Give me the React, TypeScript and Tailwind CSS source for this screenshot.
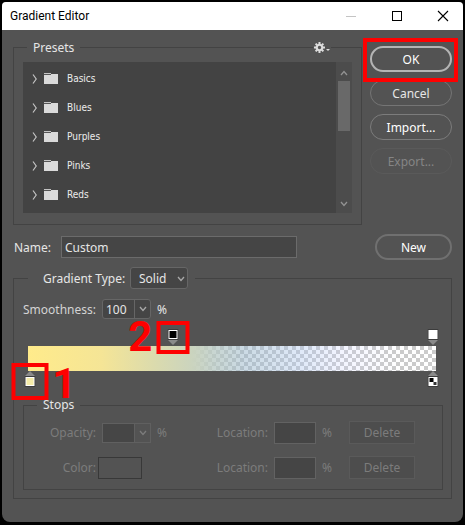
import type { ReactNode } from "react";

const folders = ["Basics", "Blues", "Purples", "Pinks", "Reds"];

function Chevron({ className = "" }: { className?: string }) {
  return (
    <svg className={className} width="8" height="6" viewBox="0 0 8 6" fill="none" stroke="currentColor" strokeWidth="1.3" aria-hidden="true">
      <path d="M1 1 L4 4.5 L7 1" />
    </svg>
  );
}

function PillButton({ children, className, disabled = false }: { children: ReactNode; className: string; disabled?: boolean }) {
  return (
    <button type="button" disabled={disabled} className={`flex h-[26px] w-full items-center justify-center rounded-full pt-[2px] ${className}`}>
      {children}
    </button>
  );
}

function Folder({ name }: { name: string }) {
  return (
    <li>
      <button type="button" className="flex h-[29px] w-full items-center text-left font-['DejaVu_Sans_Condensed','DejaVu_Sans',sans-serif] text-[10px] text-[#ececec]">
        <svg width="6" height="12" viewBox="0 0 6 12" fill="none" stroke="#c4c4c4" strokeWidth="1.2" aria-hidden="true">
          <path d="M1 1.5 L4.2 6 L1 10.5" />
        </svg>
        <svg className="ml-[6px] mr-[9px]" width="14" height="12" viewBox="0 0 14 12" aria-hidden="true">
          <path d="M0 0h7v1H0z" fill="#c4c4c4" />
          <path d="M0 1h14v10H0z" fill="#dadada" />
          <path d="M0 1h7v1H0z" fill="#555" />
        </svg>
        {name}
      </button>
    </li>
  );
}

type SwatchKind = "black" | "white" | "yellow" | "checker";

function Swatch({ kind }: { kind: SwatchKind }) {
  return (
    <svg className="block" width="11" height="11" viewBox="0 0 11 11" aria-hidden="true">
      <rect width="11" height="11" fill="#3c3c3c" />
      <rect x="1" y="1" width="9" height="9" fill="#fff" />
      {kind === "black" && <rect x="2" y="2" width="7" height="7" fill="#000" />}
      {kind === "yellow" && <rect x="2" y="2" width="7" height="7" fill="#f5eca9" />}
      {kind === "checker" && (
        <>
          <rect x="2" y="2" width="4" height="4" fill="#000" />
          <rect x="6" y="6" width="3" height="3" fill="#333" />
        </>
      )}
    </svg>
  );
}

function Stop({ at, kind, label, below = false, callout = "" }: { at: number; kind: SwatchKind; label: string; below?: boolean; callout?: string }) {
  const arrow = (
    <svg className="block" width="11" height="5" viewBox="0 0 11 5" fill="#8a8a8a" aria-hidden="true">
      <path d={below ? "M0.5 5 L5.5 0 L10.5 5z" : "M0.5 0 L5.5 5 L10.5 0z"} />
    </svg>
  );
  return (
    <div className="absolute inset-y-0 w-[11px] -translate-x-1/2" style={{ left: `${at}%` }}>
      <button type="button" aria-label={label} className="block">
        {below && arrow}
        <Swatch kind={kind} />
        {!below && arrow}
      </button>
      {callout && (
        <div className={below ? "absolute -left-[13px] -top-2 size-[37px] border-4 border-[#fe0000]" : "absolute -left-[11px] -top-2 size-[33px] border-4 border-[#fe0000]"}>
          <span className={`absolute font-['Roboto',sans-serif] text-[42px] leading-7 font-bold text-[#fe0000] ${below ? "left-[37px] top-[3px]" : "-left-8 -top-[2px]"}`}>
            {callout}
          </span>
        </div>
      )}
    </div>
  );
}

function Location({ id }: { id: string }) {
  return (
    <>
      <label htmlFor={id} className="ml-auto">Location:</label>
      <input id={id} disabled className="ml-[6px] h-[22px] w-[42px] border border-[#626262] bg-[#454545]" />
      <span className="ml-[6px] w-3">%</span>
      <button type="button" disabled className="ml-[15px] mr-[27px] h-[23px] w-[66px] border border-[#5a5a5a] bg-[#4d4d4d]">
        Delete
      </button>
    </>
  );
}

export default function App() {
  return (
    <div className="min-h-screen bg-black p-[2px] font-['Noto_Sans',sans-serif] text-[12px] leading-[18px] text-[#e6e6e6]">
      <main className="overflow-hidden rounded-lg rounded-t-[4px] bg-[#535353]">
        <header className="flex h-7 items-center bg-white pl-2 pr-[14px] text-black">
          <h1 className="font-['Roboto',sans-serif]">Gradient Editor</h1>
          <div className="ml-auto flex gap-[34px]">
            <button type="button" aria-label="Minimize">
              <svg width="12" height="12" viewBox="0 0 12 12" stroke="#c4c4c4" aria-hidden="true"><path d="M1 6.5h10" /></svg>
            </button>
            <button type="button" aria-label="Maximize">
              <svg width="12" height="12" viewBox="0 0 12 12" fill="none" stroke="#000" aria-hidden="true"><rect x="1.5" y="1.5" width="9" height="9" /></svg>
            </button>
            <button type="button" aria-label="Close">
              <svg width="12" height="12" viewBox="0 0 12 12" stroke="#000" strokeWidth="1.1" aria-hidden="true"><path d="M1 1l10 10M11 1L1 11" /></svg>
            </button>
          </div>
        </header>

        <div className="px-[11px] pb-[23px] pt-[7px]">
          <div className="flex gap-2">
            <fieldset className="relative min-w-0 flex-1 border border-[#434343] px-[9px] pb-[11px] pt-[5px]">
              <legend className="ml-[4px] h-5 px-[6px] pt-[2px]">Presets</legend>
              <button type="button" aria-label="Preset options" className="absolute -top-[18px] right-[30px] flex h-4 items-center bg-[#535353] px-[1px]">
                <svg width="11" height="11" viewBox="-6 -6 12 12" aria-hidden="true">
                  <circle r="3" fill="none" stroke="#dcdcdc" strokeWidth="2.4" />
                  <path d="M0-6V-3.5M0 6V3.5M-6 0H-3.5M6 0H3.5M-4.2-4.2L-2.8-2.8M4.2 4.2L2.8 2.8M-4.2 4.2L-2.8 2.8M4.2-4.2L2.8-2.8" stroke="#dcdcdc" strokeWidth="2.2" />
                </svg>
                <svg className="ml-[1px] mt-[6px]" width="4" height="2" viewBox="0 0 4 2" fill="#dcdcdc" aria-hidden="true"><path d="M0 0h4L2 2z" /></svg>
              </button>
              <div className="flex h-[151px] bg-[#434343]">
                <ul className="flex-1 pl-[9px] pt-[2px]">
                  {folders.map((name) => <Folder key={name} name={name} />)}
                </ul>
                <div className="flex w-4 flex-col items-center bg-[#4c4c4c] pb-[6px] pt-[8px] text-[#929292]">
                  <Chevron className="rotate-180" />
                  <div className="mt-[5px] h-[50px] w-3 bg-[#696969]" />
                  <Chevron className="mt-auto" />
                </div>
              </div>
            </fieldset>
            <div className="flex w-[82px] flex-col gap-2 pt-[9px]">
              <div className="relative">
                <PillButton className="border-2 border-[#b4b4b4] text-white">OK</PillButton>
                <div className="pointer-events-none absolute -bottom-[10px] -left-[7px] -right-[6px] -top-2 border-4 border-[#fe0000]" />
              </div>
              <PillButton className="border border-[#757575]">Cancel</PillButton>
              <PillButton className="border border-[#7c7c7c] text-white">Import...</PillButton>
              <PillButton disabled className="border border-[#5a5a5a] text-[#858585]">Export...</PillButton>
            </div>
          </div>

          <div className="mt-[9px] flex items-center">
            <label htmlFor="name" className="w-12 pl-[1px] pt-[2px]">Name:</label>
            <input id="name" defaultValue="Custom" className="h-[22px] min-w-0 flex-1 border border-[#6b6b6b] bg-[#454545] px-[3px]" />
            <div className="ml-[78px] w-[77px]">
              <PillButton className="border-2 border-[#707070] text-white">New</PillButton>
            </div>
          </div>

          <fieldset className="mt-[7px] min-w-0 border border-[#434343] pb-2 pl-[9px] pr-2 pt-[10px]">
            <legend className="ml-[5px] flex h-[22px] items-center pl-[15px] pr-[7px]">
              <label htmlFor="type" className="w-[87px] pt-[2px]">Gradient Type:</label>
              <span className="relative block">
                <select id="type" className="block h-[22px] w-[58px] appearance-none rounded-[3px] border border-[#666] bg-[#454545] pl-2 pt-[2px]">
                  <option>Solid</option>
                </select>
                <Chevron className="pointer-events-none absolute right-[3px] top-[9px] text-[#a8a8a8]" />
              </span>
            </legend>

            <div className="flex h-5 items-center">
              <label htmlFor="smooth" className="w-[79px] pt-[2px] text-[#d4d4d4]">Smoothness:</label>
              <div className="flex h-5 w-[49px] rounded-[3px] border border-[#666] bg-[#454545]">
                <input id="smooth" defaultValue="100" className="min-w-0 flex-1 pl-[3px] pt-[2px]" />
                <button type="button" aria-label="Smoothness values" className="flex w-4 items-center justify-center border-l border-[#666] text-[#a8a8a8]">
                  <Chevron />
                </button>
              </div>
              <span className="ml-[6px] pt-[2px]">%</span>
            </div>

            <div className="ml-[5px] mr-[7px] mt-[10px]">
              <div className="relative h-[17px]">
                <Stop at={35.5} kind="black" label="Opacity stop 35%" callout="2" />
                <Stop at={99.3} kind="white" label="Opacity stop 100%" />
              </div>
              <div className="h-[25px] bg-[linear-gradient(90deg,#ffeb8b_0%,#f5e596_18%,#d9daaf_32%,#cbd4be_40%,rgba(182,200,196,0.75)_46%,rgba(152,182,202,0.5)_53%,rgba(172,197,238,0.38)_67%,rgba(200,207,255,0.22)_77%,rgba(255,255,255,0)_91%),repeating-conic-gradient(#fff_0_25%,#cbcbcb_0_50%)] bg-size-[100%_100%,8px_8px]" />
              <div className="relative h-[17px]">
                <Stop at={0.4} kind="yellow" label="Color stop 0%" below callout="1" />
                <Stop at={99.3} kind="checker" label="Color stop 100%" below />
              </div>
            </div>

            <fieldset className="mt-2 min-w-0 border border-[#434343] pb-[10px] pt-[7px] text-[#7c7c7c]">
              <legend className="ml-[13px] px-[6px] text-[#e6e6e6]">Stops</legend>
              <div className="flex h-[23px] items-center">
                <label htmlFor="opacity" className="w-[72px] text-right">Opacity:</label>
                <div className="ml-[6px] flex h-5 w-[49px] border border-[#606060]">
                  <input id="opacity" disabled className="min-w-0 flex-1 bg-[#464646]" />
                  <button type="button" disabled aria-label="Opacity values" className="flex w-4 items-center justify-center border-l border-[#606060]">
                    <Chevron />
                  </button>
                </div>
                <span className="ml-[6px]">%</span>
                <Location id="opacity-location" />
              </div>
              <div className="mt-3 flex h-[23px] items-center">
                <span className="w-[72px] text-right">Color:</span>
                <button type="button" disabled aria-label="Stop color" className="ml-[2px] h-[22px] w-11 border border-[#383838]" />
                <Location id="color-location" />
              </div>
            </fieldset>
          </fieldset>
        </div>
      </main>
    </div>
  );
}
